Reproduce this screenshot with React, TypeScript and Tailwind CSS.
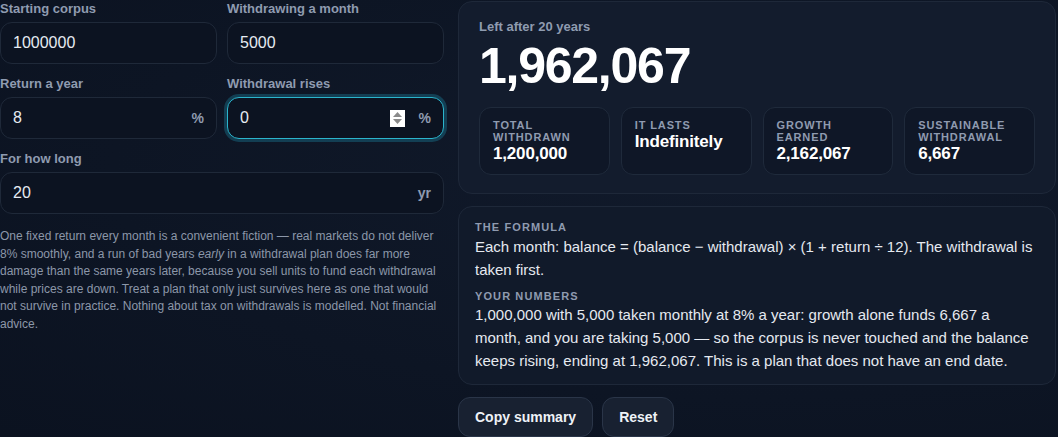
import { useState } from 'react';

type Field = {
  label: string;
  value: string;
  suffix?: string;
  focused?: boolean;
};

const fields: Field[] = [
  { label: 'Starting corpus', value: '1000000' },
  { label: 'Withdrawing a month', value: '5000' },
  { label: 'Return a year', value: '8', suffix: '%' },
  { label: 'Withdrawal rises', value: '0', suffix: '%', focused: true },
];

const stats = [
  { label: 'Total withdrawn', value: '1,200,000' },
  { label: 'It lasts', value: 'Indefinitely' },
  { label: 'Growth earned', value: '2,162,067' },
  { label: 'Sustainable withdrawal', value: '6,667' },
];

function Spinner() {
  return (
    <div className="flex h-[17px] w-[15px] flex-col items-center justify-center gap-[2px] bg-white">
      <svg width="9" height="5" viewBox="0 0 9 5">
        <path d="M4.5 0 L9 5 L0 5 Z" fill="#8a8a8a" />
      </svg>
      <svg width="9" height="5" viewBox="0 0 9 5">
        <path d="M0 0 L9 0 L4.5 5 Z" fill="#8a8a8a" />
      </svg>
    </div>
  );
}

function NumberField({ label, value, suffix, focused }: Field) {
  const [val, setVal] = useState(value);
  return (
    <div className="flex flex-col">
      <label className="text-[13px] font-bold leading-4 text-[#8f9bb0]">{label}</label>
      <div
        className={
          focused
            ? 'mt-[5px] flex h-[42px] items-center rounded-xl border border-[#2bb4cc] bg-[#0c1321] pl-3 pr-3 shadow-[0_0_0_3px_rgba(34,170,200,0.28)]'
            : 'mt-[5px] flex h-[42px] items-center rounded-xl border border-[#1f2939] bg-[#0c1321] pl-3 pr-3'
        }
      >
        <input
          type="text"
          value={val}
          onChange={(e) => setVal(e.target.value)}
          className="min-w-0 flex-1 bg-transparent text-[16px] text-[#e6ebf2] outline-none"
        />
        {focused && (
          <div className="mr-[14px]">
            <Spinner />
          </div>
        )}
        {suffix && <span className="text-[14px] font-semibold text-[#8f9bb0]">{suffix}</span>}
      </div>
    </div>
  );
}

export default function App() {
  return (
    <div className="min-h-screen w-full bg-[#0d1524] bg-[radial-gradient(ellipse_at_70%_40%,#111a2b_0%,#0d1524_60%,#0b1220_100%)] pt-px font-['Liberation_Sans',Arial,sans-serif] text-[#e5e9f0]">
      <div className="grid grid-cols-[444px_598px] gap-[14px]">
        <div className="flex flex-col">
          <div className="grid grid-cols-2 gap-x-[10px] gap-y-3">
            {fields.map((f) => (
              <NumberField key={f.label} {...f} />
            ))}
          </div>
          <div className="mt-3">
            <NumberField label="For how long" value="20" suffix="yr" />
          </div>
          <p className="mt-[14px] text-[12px] leading-[17.6px] text-[#8c97a9]">
            One fixed return every month is a convenient fiction — real markets do not deliver 8% smoothly, and a run of
            bad years <em>early</em> in a withdrawal plan does far more damage than the same years later, because you sell
            units to fund each withdrawal while prices are down. Treat a plan that only just survives here as one that
            would not survive in practice. Nothing about tax on withdrawals is modelled. Not financial advice.
          </p>
        </div>

        <div className="flex flex-col">
          <div className="rounded-[14px] border border-[#1e2839] bg-[#131c2d] px-5 pb-[18px] pt-[17px]">
            <div className="text-[13px] font-bold leading-4 text-[#8f9bb0]">Left after 20 years</div>
            <div className="mt-[7px] text-[50px] font-bold leading-[48px] tracking-tight text-white">1,962,067</div>
            <div className="mt-[17px] grid grid-cols-4 gap-[11px]">
              {stats.map((s) => (
                <div key={s.label} className="rounded-xl border border-[#1f2a3b] bg-[#0f1727] pb-[10px] pl-[13px] pr-2 pt-[11px]">
                  <div className="text-[11px] font-bold uppercase leading-3 tracking-[0.08em] text-[#8f9bb0]">
                    {s.label}
                  </div>
                  <div className="mt-px text-[17px] font-bold leading-5 tracking-[-0.01em] text-white">{s.value}</div>
                </div>
              ))}
            </div>
          </div>

          <div className="mt-[12px] rounded-[14px] border border-[#1e2839] bg-[#111a2a] px-4 pb-[12px] pt-[14px]">
            <div className="text-[11px] font-bold uppercase leading-3 tracking-[0.1em] text-[#8f9bb0]">The formula</div>
            <p className="mt-[2px] text-[15px] leading-[23px] text-[#e5e9f0]">
              Each month: balance = (balance − withdrawal) × (1 + return ÷ 12). The withdrawal is taken first.
            </p>
            <div className="mt-[9px] text-[11px] font-bold uppercase leading-3 tracking-[0.1em] text-[#8f9bb0]">
              Your numbers
            </div>
            <p className="mt-[1px] text-[15px] leading-[23px] text-[#e5e9f0]">
              1,000,000 with 5,000 taken monthly at 8% a year: growth alone funds 6,667 a month, and you are taking 5,000 —
              so the corpus is never touched and the balance keeps rising, ending at 1,962,067. This is a plan that does not
              have an end date.
            </p>
          </div>

          <div className="mt-[12px] flex gap-[9px]">
            <button className="h-10 rounded-xl border border-[#2a3548] bg-[#182131] px-4 text-[14px] font-bold text-[#eef2f7]">
              Copy summary
            </button>
            <button className="h-10 rounded-xl border border-[#2a3548] bg-[#182131] px-4 text-[14px] font-bold text-[#eef2f7]">
              Reset
            </button>
          </div>
        </div>
      </div>
    </div>
  );
}
